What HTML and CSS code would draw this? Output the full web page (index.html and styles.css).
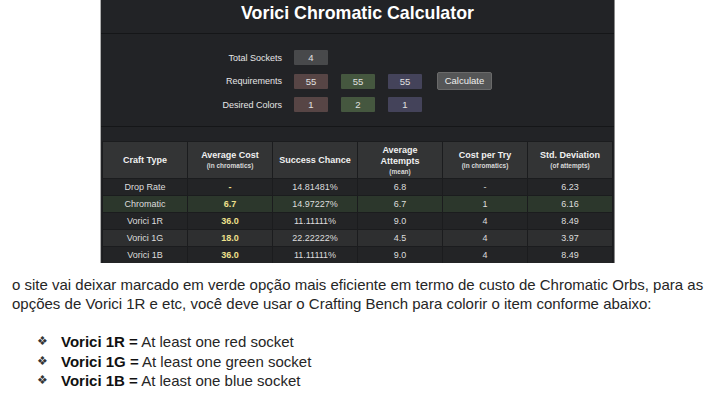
FILE: index.html
```html
<!DOCTYPE html>
<html>
<head>
<meta charset="utf-8">
<link rel="stylesheet" href="styles.css">
</head>
<body>
<div class="panel">
  <h1 class="title">Vorici Chromatic Calculator</h1>
  <div class="form">
    <div class="label">Total Sockets</div>
    <div class="inputs"><span class="box gray">4</span></div>
    <div class="label">Requirements</div>
    <div class="inputs"><span class="box red">55</span><span class="box green">55</span><span class="box blue">55</span><span class="btn">Calculate</span></div>
    <div class="label">Desired Colors</div>
    <div class="inputs"><span class="box red">1</span><span class="box green">2</span><span class="box blue">1</span></div>
  </div>
  <div class="tablewrap">
    <table class="results">
      <thead>
        <tr>
          <th>Craft Type</th>
          <th>Average Cost<small>(in chromatics)</small></th>
          <th>Success Chance</th>
          <th>Average<br>Attempts<small>(mean)</small></th>
          <th>Cost per Try<small>(in chromatics)</small></th>
          <th>Std. Deviation<small>(of attempts)</small></th>
        </tr>
      </thead>
      <tbody>
        <tr><td>Drop Rate</td><td class="cost">-</td><td>14.81481%</td><td>6.8</td><td>-</td><td>6.23</td></tr>
        <tr class="best"><td>Chromatic</td><td class="cost">6.7</td><td>14.97227%</td><td>6.7</td><td>1</td><td>6.16</td></tr>
        <tr><td>Vorici 1R</td><td class="cost">36.0</td><td>11.11111%</td><td>9.0</td><td>4</td><td>8.49</td></tr>
        <tr class="alt"><td>Vorici 1G</td><td class="cost">18.0</td><td>22.22222%</td><td>4.5</td><td>4</td><td>3.97</td></tr>
        <tr><td>Vorici 1B</td><td class="cost">36.0</td><td>11.11111%</td><td>9.0</td><td>4</td><td>8.49</td></tr>
      </tbody>
    </table>
  </div>
</div>
<p class="para">o site vai deixar marcado em verde opção mais eficiente em termo de custo de Chromatic Orbs, para as opções de Vorici 1R e etc, você deve usar o Crafting Bench para colorir o item conforme abaixo:</p>
<ul class="list">
  <li><b>Vorici 1R =</b> At least one red socket</li>
  <li><b>Vorici 1G =</b> At least one green socket</li>
  <li><b>Vorici 1B =</b> At least one blue socket</li>
</ul>
</body>
</html>
```
FILE: styles.css
```css
html, body {
  margin: 0;
  padding: 0;
  background: #ffffff;
}
body {
  font-family: "Liberation Sans", Arial, sans-serif;
}
.panel {
  margin-left: 100px;
  width: 513px;
  height: 263px;
  overflow: hidden;
  background: #222326;
  border-left: 1px solid #b0b0b0;
  border-right: 1px solid #8a8a8a;
}
.title {
  margin: 0;
  height: 33px;
  line-height: 26px;
  text-align: center;
  font-size: 17.8px;
  font-weight: bold;
  color: #ffffff;
  border-bottom: 1px solid #151618;
}
.form {
  display: grid;
  grid-template-columns: 100px auto;
  column-gap: 12px;
  row-gap: 8.5px;
  padding: 16px 0 14px 81px;
  border-bottom: 1px solid #151618;
  align-items: center;
}
.label {
  text-align: right;
  font-size: 9px;
  color: #e6e6e6;
}
.inputs {
  display: flex;
  align-items: center;
  gap: 13px;
  height: 15px;
}
.box {
  width: 34px;
  height: 15px;
  line-height: 15px;
  text-align: center;
  font-size: 9.5px;
  color: #e0e0e0;
  border-radius: 1px;
}
.gray { background: #48494b; }
.red { background: #574545; }
.green { background: #45573f; }
.blue { background: #44435a; }
.btn {
  margin-left: 2px;
  width: 53px;
  height: 16px;
  line-height: 16px;
  text-align: center;
  font-size: 9.5px;
  color: #eeeeee;
  background: #555657;
  border: 1px solid #6a6a6a;
  border-radius: 2px;
}
.tablewrap {
  padding: 14px 2px 0 1px;
}
.results {
  width: 511px;
  border-collapse: collapse;
  table-layout: fixed;
  font-size: 9px;
  color: #dddddd;
}
.results th, .results td {
  border: 1px solid #1b1c1e;
  text-align: center;
  padding: 0;
}
.results th {
  height: 36px;
  background: #333435;
  font-weight: bold;
  color: #f0f0f0;
  line-height: 11px;
}
.results th small {
  display: block;
  font-size: 6.5px;
  line-height: 9px;
  font-weight: bold;
  color: #d8d8d8;
}
.results td {
  height: 16px;
  background: #232426;
}
.results tr.alt td {
  background: #2e2f30;
}
.results tr.best td {
  background: #2c372c;
}
.results td.cost {
  color: #eee08c;
  font-weight: bold;
}
.para {
  margin: 13px 0 0 12px;
  width: 697px;
  font-size: 15px;
  line-height: 18.5px;
  color: #262626;
}
.list {
  margin: 19px 0 0 0;
  padding: 0 0 0 61px;
  list-style: none;
  font-size: 15px;
  line-height: 19.5px;
  color: #262626;
}
.list b {
  color: #111111;
}
.list li {
  position: relative;
}
.list li::before {
  content: "❖";
  position: absolute;
  left: -24px;
  font-size: 12px;
  color: #333333;
}
```
